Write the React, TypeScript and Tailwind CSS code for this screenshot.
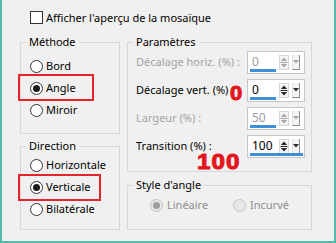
import React from 'react';

function Radio({ checked, disabled }: { checked?: boolean; disabled?: boolean }) {
  return (
    <span
      className={`flex h-[13px] w-[13px] shrink-0 items-center justify-center rounded-full border ${
        disabled ? 'border-[#c2c2c2] bg-[#e8e8e8]' : 'border-[#333333] bg-white'
      }`}
    >
      {checked && <span className={`h-[7px] w-[7px] rounded-full ${disabled ? 'bg-[#9d9d9d]' : 'bg-[#1b1b1b]'}`} />}
    </span>
  );
}

function Option({ label, checked, box }: { label: string; checked?: boolean; box?: 'angle' | 'verticale' }) {
  return (
    <div className="relative flex h-[22px] items-center gap-[3px]">
      <Radio checked={checked} />
      <span>{label}</span>
      {box === 'angle' && (
        <span className="pointer-events-none absolute left-[-12px] top-[-3px] h-[27px] w-[76px] border-2 border-[#e4262c]" />
      )}
      {box === 'verticale' && (
        <span className="pointer-events-none absolute left-[-12px] top-[-2px] h-[27px] w-[83px] border-2 border-[#e4262c]" />
      )}
    </div>
  );
}

function Spin({ value, disabled, full }: { value: string; disabled?: boolean; full?: boolean }) {
  const arrow = disabled ? '#a8a8a8' : '#2a2a2a';
  return (
    <div className="relative flex h-[23px] w-[58px] items-center border border-[#c6c6c6] bg-white">
      <span className={`flex-1 pl-[4px] text-[12px] ${disabled ? 'text-[#9c9c9c]' : 'text-black'}`}>{value}</span>
      <svg width="10" height="15" viewBox="0 0 10 15" className="mr-[3px]">
        <rect x="0.5" y="0.5" width="9" height="14" fill="#f4f4f4" stroke="#d6d6d6" />
        <polygon points="5,2.5 1.8,6 8.2,6" fill={arrow} />
        <line x1="1.5" y1="7.5" x2="8.5" y2="7.5" stroke={arrow} />
        <polygon points="1.8,9 8.2,9 5,12.5" fill={arrow} />
      </svg>
      <span className="mr-[4px] flex h-[15px] w-[8px] items-center justify-center border-b border-l border-r border-b-[#8c8c8c] border-l-[#e2e2e2] border-r-[#8c8c8c] bg-[#f4f4f4]">
        <svg width="6" height="4" viewBox="0 0 6 4">
          <polygon points="0,0 6,0 3,3.5" fill={arrow} />
        </svg>
      </span>
      <span className={`absolute bottom-[1px] left-[2px] h-[3px] bg-[#3e8fd9] ${full ? 'w-[53px]' : 'w-[26px]'}`} />
    </div>
  );
}

function Row({ label, disabled, children }: { label: string; disabled?: boolean; children: React.ReactNode }) {
  return (
    <div className="relative flex h-[28px] items-center justify-between pl-[8px] pr-[6px]">
      <span className={`whitespace-nowrap ${disabled ? 'text-[#a3a3a3]' : 'text-black'}`}>{label}</span>
      {children}
    </div>
  );
}

const mark = "pointer-events-none absolute origin-left scale-x-110 font-['Liberation_Sans',Arial,sans-serif] font-bold leading-none text-[#e3161d] [-webkit-text-stroke:1px_#e3161d]";

export default function App() {
  return (
    <div className="h-[243px] w-[336px] overflow-hidden border-x-2 border-b-2 border-[#55b9ad] bg-[#f0f0f0] font-['Noto_Sans','Segoe_UI',sans-serif] text-[11px] leading-[16px] text-black">
      <div className="ml-[28px] mt-[11px] flex h-[13px] items-center gap-[3px]">
        <span className="h-[13px] w-[13px] shrink-0 border border-[#333333] bg-white" />
        <span className="whitespace-nowrap">Afficher l'aperçu de la mosaïque</span>
      </div>

      <div className="ml-[18px] mt-[10px] flex gap-[7px]">
        <div className="flex w-[100px] flex-col gap-[4px]">
          <fieldset className="h-[100px] border border-[#d7d7d7]">
            <legend className="ml-[5px] px-[3px]">Méthode</legend>
            <div className="pl-[9px] pt-[5px]">
              <Option label="Bord" />
              <Option label="Angle" checked box="angle" />
              <Option label="Miroir" />
            </div>
          </fieldset>
          <fieldset className="h-[92px] border border-[#d7d7d7]">
            <legend className="ml-[5px] px-[3px]">Direction</legend>
            <div className="pl-[9px]">
              <Option label="Horizontale" />
              <Option label="Verticale" checked box="verticale" />
              <Option label="Bilatérale" />
            </div>
          </fieldset>
        </div>

        <div className="flex w-[185px] flex-col gap-[5px]">
          <fieldset className="h-[138px] border border-[#d7d7d7]">
            <legend className="ml-[5px] px-[3px]">Paramètres</legend>
            <div className="-mt-[2px]">
              <Row label="Décalage horiz. (%) :" disabled>
                <Spin value="0" disabled />
              </Row>
              <Row label="Décalage vert. (%) :">
                <Spin value="0" />
                <span className={`${mark} left-[102px] top-[7px] text-[20px]`}>0</span>
              </Row>
              <Row label="Largeur (%) :" disabled>
                <Spin value="50" disabled />
              </Row>
              <Row label="Transition (%) :">
                <Spin value="100" full />
                <span className={`${mark} left-[69px] top-[19px] text-[22px] tracking-[1px]`}>100</span>
              </Row>
            </div>
          </fieldset>
          <fieldset className="h-[53px] border border-[#d7d7d7]">
            <legend className="ml-[5px] px-[3px]">Style d'angle</legend>
            <div className="flex h-[22px] items-center pl-[22px] pt-[2px] text-[#8e8e8e]">
              <div className="flex w-[83px] items-center gap-[4px]">
                <Radio checked disabled />
                <span>Linéaire</span>
              </div>
              <div className="flex items-center gap-[4px]">
                <Radio disabled />
                <span>Incurvé</span>
              </div>
            </div>
          </fieldset>
        </div>
      </div>
    </div>
  );
}
